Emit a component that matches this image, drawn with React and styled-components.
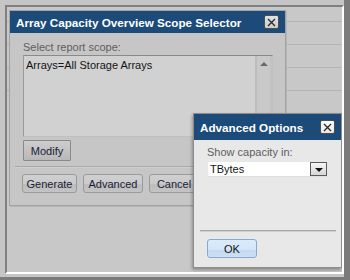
import React from 'react';
import styled, { createGlobalStyle } from 'styled-components';

const gridRows = [15, 23, 23, 23];

function CloseIcon() {
  return (
    <svg width="9" height="9" viewBox="0 0 9 9">
      <path d="M1 1 L8 8 M8 1 L1 8" stroke="#2a2a2a" strokeWidth="1.3" fill="none" />
    </svg>
  );
}

function App() {
  return (
    <>
      <GlobalStyle />
      <Frame>
        <Screen>
          {gridRows.map((h, i) => (
            <GridRow key={i} style={{ height: h }} />
          ))}

          <Dialog $left={2} $top={3} $width={277} $height={196}>
            <TitleBar $height={22}>
              <Title>Array Capacity Overview Scope Selector</Title>
              <CloseButton>
                <CloseIcon />
              </CloseButton>
            </TitleBar>
            <MainBody>
              <Label>Select report scope:</Label>
              <ScopeBox>
                <ScopeText>Arrays=All Storage Arrays</ScopeText>
                <ScrollTrack>
                  <UpArrow />
                </ScrollTrack>
              </ScopeBox>
              <Button $flat $width={48} $height={21}>Modify</Button>
              <Separator $mt={5} $ml={-8} $mr={-7} />
              <ButtonRow>
                <Button $width={55}>Generate</Button>
                <Button $width={60}>Advanced</Button>
                <Button $width={50}>Cancel</Button>
              </ButtonRow>
            </MainBody>
          </Dialog>

          <Dialog $left={186} $top={106} $width={149} $height={155} $light>
            <TitleBar $height={26}>
              <Title>Advanced Options</Title>
              <CloseButton $light>
                <CloseIcon />
              </CloseButton>
            </TitleBar>
            <AdvBody>
              <Label>Show capacity in:</Label>
              <Select>
                <span>TBytes</span>
                <DropButton>
                  <DownArrow />
                </DropButton>
              </Select>
              <Separator $mt={53} $ml={-7} $mr={-8} />
              <OkButton>OK</OkButton>
            </AdvBody>
          </Dialog>
        </Screen>
      </Frame>
    </>
  );
}

const GlobalStyle = createGlobalStyle`
  html, body {
    margin: 0;
    padding: 0;
    font-family: "Liberation Sans", Arial, sans-serif;
  }
`;

const Frame = styled.div`
  box-sizing: border-box;
  width: 350px;
  height: 280px;
  display: flex;
  background: #c5c5c5;
  padding: 5px 0 3px 5px;
  border-right: 6px solid #7b7b7b;
  border-bottom: 3px solid #7b7b7b;
`;

const Screen = styled.div`
  position: relative;
  flex: 1;
  overflow: hidden;
  background: #c8c8c8;
  border-top: 2px solid #808080;
  border-left: 2px solid #808080;
  border-right: 2px solid #ffffff;
  border-bottom: 2px solid #ffffff;
`;

const GridRow = styled.div`
  box-sizing: border-box;
  border-bottom: 1px solid #b3b3b3;
`;

const Dialog = styled.div`
  position: absolute;
  left: ${({ $left }) => $left}px;
  top: ${({ $top }) => $top}px;
  width: ${({ $width }) => $width}px;
  height: ${({ $height }) => $height}px;
  box-sizing: border-box;
  display: flex;
  flex-direction: column;
  background: ${({ $light }) => ($light ? '#e8e8e8' : '#c6c6c6')};
  border: 1px solid ${({ $light }) => ($light ? '#8c8c8c' : '#a2a2a2')};
  box-shadow: ${({ $light }) =>
    $light ? '-1px 2px 3px rgba(0, 0, 0, 0.3)' : '1px 1px 0 #b6b6b6'};
`;

const TitleBar = styled.div`
  flex: none;
  height: ${({ $height }) => $height}px;
  display: flex;
  align-items: center;
  justify-content: space-between;
  padding: 0 6px 0 6px;
  background: #1c4a79;
`;

const Title = styled.span`
  color: #ffffff;
  font-weight: bold;
  font-size: 11.7px;
  white-space: nowrap;
`;

const CloseButton = styled.div`
  box-sizing: border-box;
  width: 15px;
  height: 14px;
  display: flex;
  align-items: center;
  justify-content: center;
  border: 1px solid #4e4e4e;
  border-radius: 2px;
  background: ${({ $light }) =>
    $light ? 'linear-gradient(#ffffff, #e6e6e6)' : 'linear-gradient(#e2e2e2, #cdcdcd)'};
`;

const MainBody = styled.div`
  display: flex;
  flex-direction: column;
  align-items: flex-start;
  padding: 8px 12px 0 13px;
`;

const Label = styled.div`
  font-size: 11px;
  line-height: 13px;
  color: #5e5e5e;
  margin-bottom: 1px;
`;

const ScopeBox = styled.div`
  box-sizing: border-box;
  width: 250px;
  height: 82px;
  display: flex;
  background: #d1d1d1;
  border-top: 1px solid #8a8a8a;
  border-left: 1px solid #9a9a9a;
  border-right: 1px solid #c0c0c0;
  border-bottom: 1px solid #c0c0c0;
`;

const ScopeText = styled.div`
  flex: 1;
  padding: 3px 2px;
  font-size: 11px;
  line-height: 13px;
  color: #141414;
`;

const ScrollTrack = styled.div`
  box-sizing: border-box;
  width: 17px;
  display: flex;
  justify-content: center;
  padding-top: 6px;
  background: #c9c9c9;
  border-left: 2px solid #bdbdbd;
  border-right: 2px solid #c2c2c2;
`;

const UpArrow = styled.div`
  width: 0;
  height: 0;
  border-left: 4px solid transparent;
  border-right: 4px solid transparent;
  border-bottom: 4px solid #6a6a6a;
`;

const Button = styled.div`
  box-sizing: border-box;
  width: ${({ $width }) => $width}px;
  height: ${({ $height }) => $height || 19}px;
  display: flex;
  align-items: center;
  justify-content: center;
  margin-top: ${({ $flat }) => ($flat ? '3px' : '0')};
  font-size: 11px;
  color: #1b2036;
  border: 1px solid ${({ $flat }) => ($flat ? '#8a8a8a' : '#9a9a9a')};
  border-radius: ${({ $flat }) => ($flat ? '1px' : '3px')};
  background: ${({ $flat }) =>
    $flat
      ? 'linear-gradient(#cdcdcd, #b8b8b8)'
      : 'linear-gradient(#d0d0d0 0%, #cacaca 55%, #bdbdbd 56%, #c4c4c4 100%)'};
`;

const Separator = styled.div`
  align-self: stretch;
  height: 1px;
  margin: ${({ $mt, $ml, $mr }) => `${$mt}px ${$mr}px 0 ${$ml}px`};
  background: #a9a9a9;
  border-bottom: 1px solid ${({ $light }) => ($light ? '#f4f4f4' : '#cfcfcf')};
`;

const ButtonRow = styled.div`
  display: flex;
  gap: 6px;
  margin: 6px 0 0 -1px;
`;

const AdvBody = styled.div`
  display: flex;
  flex-direction: column;
  align-items: flex-start;
  padding: 6px 13px 0 13px;
`;

const Select = styled.div`
  box-sizing: border-box;
  width: 119px;
  height: 15px;
  margin: 2px 0 0 1px;
  display: flex;
  align-items: center;
  justify-content: space-between;
  padding-left: 2px;
  background: #ffffff;
  border-bottom: 1px solid #e0e0e0;
  font-size: 11px;
  color: #141414;
`;

const DropButton = styled.div`
  box-sizing: border-box;
  width: 17px;
  height: 14px;
  display: flex;
  align-items: center;
  justify-content: center;
  border: 1px solid #5a5a5a;
  background: linear-gradient(#f6f6f6, #d6d6d6);
`;

const DownArrow = styled.div`
  width: 0;
  height: 0;
  margin-top: 2px;
  border-left: 4px solid transparent;
  border-right: 4px solid transparent;
  border-top: 4px solid #111111;
`;

const OkButton = styled.div`
  box-sizing: border-box;
  width: 50px;
  height: 19px;
  margin-top: 7px;
  display: flex;
  align-items: center;
  justify-content: center;
  font-size: 11px;
  color: #111111;
  border: 1px solid #86a9d3;
  border-radius: 3px;
  background: linear-gradient(#dcebfa 0%, #d4e5f7 60%, #c3d9f0 61%, #cde0f4 100%);
`;

export default App;
